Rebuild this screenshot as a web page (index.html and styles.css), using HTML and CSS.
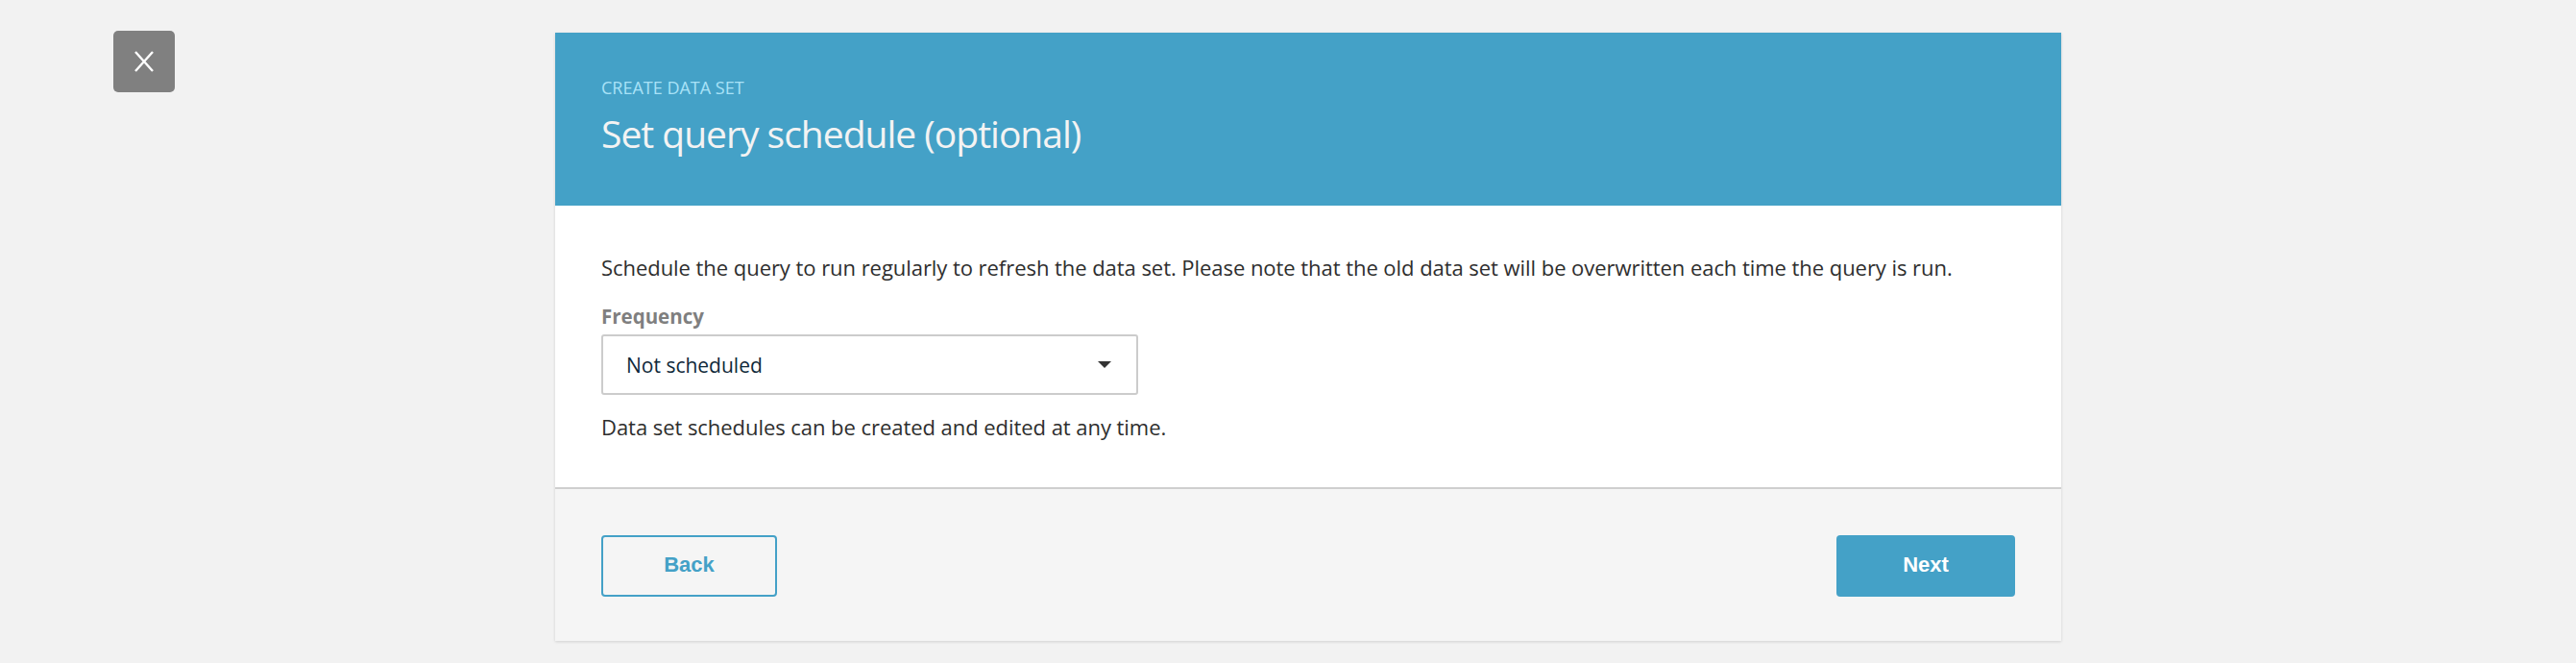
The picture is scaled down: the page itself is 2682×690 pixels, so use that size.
FILE: index.html
```html
<!DOCTYPE html>
<html lang="en">
<head>
<meta charset="utf-8">
<title>Set query schedule</title>
<link rel="stylesheet" href="styles.css">
</head>
<body>
<div class="page">
  <button class="close-btn" aria-label="Close">
    <svg width="20" height="22" viewBox="0 0 20 22" aria-hidden="true">
      <path d="M1 1 L19 21 M19 1 L1 21" stroke="#ffffff" stroke-width="2.4" fill="none"/>
    </svg>
  </button>
  <div class="card">
    <div class="card-header">
      <div class="eyebrow">CREATE DATA SET</div>
      <h1 class="title">Set query schedule (optional)</h1>
    </div>
    <div class="card-body">
      <p class="intro">Schedule the query to run regularly to refresh the data set. Please note that the old data set will be overwritten each time the query is run.</p>
      <label class="field-label">Frequency</label>
      <div class="select">
        <span class="select-value">Not scheduled</span>
        <span class="caret"></span>
      </div>
      <p class="hint">Data set schedules can be created and edited at any time.</p>
    </div>
    <div class="card-footer">
      <button class="btn btn-secondary">Back</button>
      <button class="btn btn-primary">Next</button>
    </div>
  </div>
</div>
</body>
</html>
```
FILE: styles.css
```css
html, body {
  margin: 0;
  padding: 0;
  background: #f2f2f2;
  height: 690px;
  overflow: hidden;
}
body {
  font-family: "Open Sans", "Noto Sans", sans-serif;
  width: 2682px;
}
.page {
  display: flex;
  align-items: flex-start;
  padding: 32px 0 0 118px;
  gap: 396px;
}
.close-btn {
  width: 64px;
  height: 64px;
  border: none;
  border-radius: 5px;
  background: #808080;
  padding: 0;
  display: flex;
  align-items: center;
  justify-content: center;
  flex: none;
}
.close-btn svg {
  display: block;
}
.card {
  width: 1568px;
  margin-top: 2px;
  background: #ffffff;
  box-shadow: 0 1px 3px rgba(0, 0, 0, 0.14);
  flex: none;
}
.card-header {
  background: #44a1c7;
  height: 180px;
  box-sizing: border-box;
  padding: 45px 48px 0 48px;
}
.eyebrow {
  font-size: 18px;
  line-height: 24px;
  color: #a9e2f7;
}
.title {
  margin: 12px 0 0 0;
  font-size: 39px;
  line-height: 48px;
  font-weight: 400;
  color: #f3f3f3;
  letter-spacing: -1px;
}
.card-body {
  padding: 50px 48px 49px 48px;
  border-bottom: 2px solid #cfcfcf;
  color: #2e2e2e;
}
.intro {
  margin: 0;
  font-size: 22px;
  line-height: 28px;
  letter-spacing: -0.05px;
}
.field-label {
  display: block;
  margin-top: 23px;
  font-size: 20.5px;
  line-height: 28px;
  font-weight: 700;
  color: #7f7f7f;
}
.select {
  margin-top: 5px;
  width: 559px;
  height: 63px;
  box-sizing: border-box;
  border: 2px solid #cccccc;
  border-radius: 3px;
  display: flex;
  align-items: center;
  justify-content: space-between;
  padding: 0 26px 0 24px;
}
.select-value {
  font-size: 21px;
  line-height: 28px;
  color: #10293a;
}
.caret {
  width: 0;
  height: 0;
  border-left: 7px solid transparent;
  border-right: 7px solid transparent;
  border-top: 7px solid #333333;
}
.hint {
  margin: 19px 0 0 0;
  font-size: 22px;
  line-height: 28px;
  letter-spacing: -0.05px;
}
.card-footer {
  background: #f5f5f5;
  padding: 48px 48px 46px 48px;
  display: flex;
  justify-content: space-between;
  align-items: center;
}
.btn {
  height: 64px;
  border-radius: 4px;
  font-family: "Liberation Sans", Arial, sans-serif;
  font-weight: 700;
  font-size: 22px;
  box-sizing: border-box;
  padding: 0 0 3px 0;
}
.btn-secondary {
  width: 183px;
  background: transparent;
  border: 2px solid #44a1c7;
  color: #44a1c7;
}
.btn-primary {
  width: 186px;
  background: #44a1c7;
  border: none;
  color: #ffffff;
}
```
